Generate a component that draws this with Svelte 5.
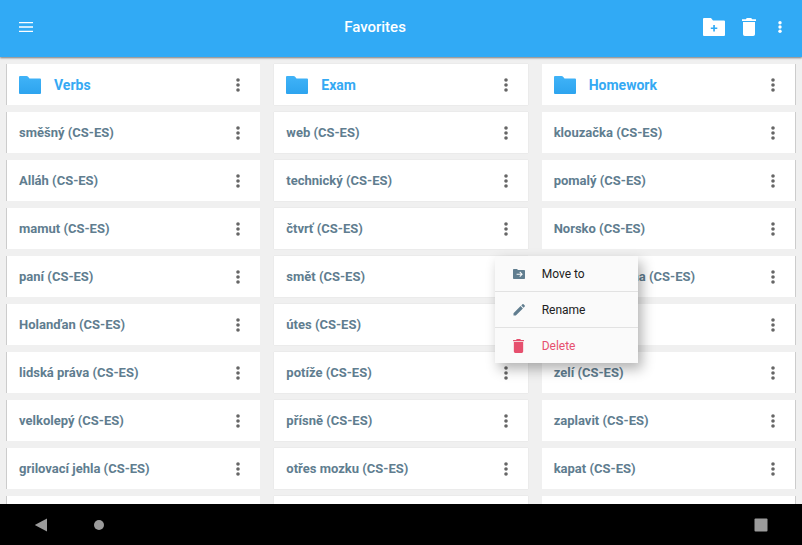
<script>
	const columns = [
		{
			folder: 'Verbs',
			words: ['směšný', 'Alláh', 'mamut', 'paní', 'Holanďan', 'lidská práva', 'velkolepý', 'grilovací jehla']
		},
		{
			folder: 'Exam',
			words: ['web', 'technický', 'čtvrť', 'smět', 'útes', 'potíže', 'přísně', 'otřes mozku']
		},
		{
			folder: 'Homework',
			words: ['klouzačka', 'pomalý', 'Norsko', 'sladká smetana', 'byt', 'zelí', 'zaplavit', 'kapat']
		}
	];

	let openWord = $state('smět');

	function toggleMenu(word) {
		openWord = openWord === word ? '' : word;
	}
</script>

{#snippet dots()}
	<svg class="dots" width="6" height="16" viewBox="0 0 6 16" aria-hidden="true">
		<circle cx="3" cy="3" r="1.8" />
		<circle cx="3" cy="8" r="1.8" />
		<circle cx="3" cy="13" r="1.8" />
	</svg>
{/snippet}

{#snippet trash(width, height)}
	<svg {width} {height} viewBox="0 0 14 18" aria-hidden="true">
		<path d="M0 1.2h3.8L4.8 0h4.4l1 1.2H14V3H0zM1 4h12v12.2a1.8 1.8 0 0 1-1.8 1.8H2.8A1.8 1.8 0 0 1 1 16.2z" />
	</svg>
{/snippet}

<div class="app">
	<header class="toolbar">
		<button class="tool menu-button" aria-label="Open navigation">
			<svg width="14" height="10" viewBox="0 0 14 10" aria-hidden="true">
				<path d="M0 0h14v1.3H0zM0 4.3h14v1.4H0zM0 8.7h14V10H0z" />
			</svg>
		</button>
		<h1 class="title">Favorites</h1>
		<div class="actions">
			<button class="tool" aria-label="New folder">
				<svg width="22" height="18" viewBox="0 0 22 18" aria-hidden="true">
					<path fill-rule="evenodd" d="M0 1a1 1 0 0 1 1-1h7l2 2.6h11a1 1 0 0 1 1 1V17a1 1 0 0 1-1 1H1a1 1 0 0 1-1-1zM10.2 7v2.4H7.8v1.7h2.4v2.4h1.7v-2.4h2.4V9.4h-2.4V7z" />
				</svg>
			</button>
			<button class="tool" aria-label="Delete">{@render trash(14, 18)}</button>
			<button class="tool more" aria-label="More options">
				<svg width="4" height="12" viewBox="0 0 4 12" aria-hidden="true">
					<circle cx="2" cy="1.7" r="1.7" />
					<circle cx="2" cy="6" r="1.7" />
					<circle cx="2" cy="10.3" r="1.7" />
				</svg>
			</button>
		</div>
	</header>

	<main class="columns">
		{#each columns as column}
			<ul class="column">
				<li class="card folder">
					<svg class="folder-icon" width="22" height="18" viewBox="0 0 22 18" aria-hidden="true">
						<defs>
							<linearGradient id="fill-{column.folder}" x1="0" y1="0" x2="0" y2="1">
								<stop offset="0" stop-color="#40b3f8" />
								<stop offset="1" stop-color="#2da4ef" />
							</linearGradient>
						</defs>
						<path fill="url(#fill-{column.folder})" d="M0 1a1 1 0 0 1 1-1h6.5a2 2 0 0 1 1.4.6l1.6 2H21a1 1 0 0 1 1 1V17a1 1 0 0 1-1 1H1a1 1 0 0 1-1-1z" />
					</svg>
					<span class="name">{column.folder}</span>
					<button class="card-more" aria-label="Options for {column.folder}">{@render dots()}</button>
				</li>
				{#each column.words as word}
					<li class="card">
						<span class="name">{word} (CS-ES)</span>
						<button class="card-more" aria-label="Options for {word}" onclick={() => toggleMenu(word)}>
							{@render dots()}
						</button>
						{#if openWord === word}
							<div class="popup" role="menu">
								<button class="popup-item" role="menuitem">
									<span class="popup-icon">
										<svg width="12" height="10" viewBox="0 0 12 10" aria-hidden="true">
											<path fill-rule="evenodd" d="M0 .8A.8.8 0 0 1 .8 0H4l1 .9h6.2a.8.8 0 0 1 .8.8v7.5a.8.8 0 0 1-.8.8H.8a.8.8 0 0 1-.8-.8zM6.4 3.2l1.4 1.5H3.6v1h4.2L6.4 7.2l.7.7 2.7-2.7-2.7-2.7z" />
										</svg>
									</span>
									Move to
								</button>
								<button class="popup-item" role="menuitem">
									<span class="popup-icon">
										<svg width="12" height="12" viewBox="0 0 12 12" aria-hidden="true">
											<path d="M.5 9.2 7.6 2.1l2.3 2.3-7.1 7.1H.5zM8.3 1.4 9.4.3a.9.9 0 0 1 1.2 0l1.1 1.1a.9.9 0 0 1 0 1.2l-1.1 1.1z" />
										</svg>
									</span>
									Rename
								</button>
								<button class="popup-item danger" role="menuitem">
									<span class="popup-icon">{@render trash(11, 14)}</span>
									Delete
								</button>
							</div>
						{/if}
					</li>
				{/each}
				<li class="card"></li>
			</ul>
		{/each}
	</main>

	<nav class="system-bar">
		<button class="system" aria-label="Back">
			<svg width="14" height="14" viewBox="0 0 14 14" aria-hidden="true">
				<path d="M13 .5v13L1.2 7.3a.4.4 0 0 1 0-.6z" />
			</svg>
		</button>
		<button class="system" aria-label="Home">
			<svg width="10" height="10" viewBox="0 0 10 10" aria-hidden="true">
				<circle cx="5" cy="5" r="5" />
			</svg>
		</button>
		<button class="system recent" aria-label="Recent apps">
			<svg width="14" height="14" viewBox="0 0 14 14" aria-hidden="true">
				<rect x=".5" y=".5" width="13" height="13" rx="1" />
			</svg>
		</button>
	</nav>
</div>

<style>
	:global(body) {
		background: #f0f0f0;
	}

	.app {
		display: flex;
		flex-direction: column;
		height: 100vh;
		overflow: hidden;
		font-family: Roboto, "Liberation Sans", sans-serif;
		background: #f0f0f0;
	}

	button {
		display: flex;
		align-items: center;
		justify-content: center;
		padding: 0;
		border: 0;
		background: none;
		font: inherit;
		color: inherit;
		cursor: pointer;
	}
	svg {
		display: block;
		fill: currentColor;
	}

	/* Toolbar */
	.toolbar {
		display: grid;
		grid-template-columns: 1fr auto 1fr;
		align-items: center;
		flex: none;
		height: 57px;
		padding: 0 8px 3px;
		box-sizing: border-box;
		color: #fff;
		background: #31aaf5;
		box-shadow: 0 1px 2px rgba(0, 0, 0, 0.5);
	}
	.title {
		margin: 0;
		padding-right: 52px;
		font-size: 15px;
		font-weight: 500;
		line-height: 20px;
	}
	.tool {
		width: 35px;
		height: 36px;
	}
	.menu-button {
		width: 36px;
	}
	.actions {
		display: flex;
		justify-content: flex-end;
	}
	.more {
		width: 28px;
	}

	/* Word cards */
	.columns {
		display: grid;
		grid-template-columns: repeat(3, 1fr);
		gap: 14px;
		flex: 1;
		min-height: 0;
		padding: 7px 7px 0;
		overflow: hidden;
	}
	.column {
		display: flex;
		flex-direction: column;
		gap: 7px;
		margin: 0;
		padding: 0;
		list-style: none;
	}
	.card {
		position: relative;
		display: flex;
		align-items: center;
		flex: none;
		height: 41px;
		padding-left: 12px;
		box-sizing: border-box;
		color: #607d8f;
		background: #fff;
	}
	.column:first-child .card {
		box-shadow: -1px 0 rgba(0, 0, 0, 0.15);
	}
	.column:nth-child(2) .card {
		box-shadow: 0 0 1px rgba(0, 0, 0, 0.12);
	}
	.column:last-child .card {
		box-shadow: 1px 0 rgba(0, 0, 0, 0.15);
	}
	.name {
		flex: 1;
		font-size: 13px;
		font-weight: 700;
		line-height: 20px;
	}
	.folder {
		gap: 13px;
		color: #35a9f3;
	}
	.folder .name {
		font-size: 14px;
	}
	.card-more {
		width: 44px;
		height: 40px;
		color: #666;
	}

	/* Options menu */
	.popup {
		position: absolute;
		top: 0;
		right: -110px;
		z-index: 2;
		width: 143px;
		background: #fafafa;
		box-shadow: 4px 6px 12px rgba(0, 0, 0, 0.3);
	}
	.popup-item {
		justify-content: flex-start;
		gap: 15px;
		width: 100%;
		height: 35px;
		padding-left: 16px;
		font-size: 12px;
		color: #212121;
	}
	.popup-item + .popup-item {
		height: 36px;
		border-top: 1px solid #e2e2e2;
	}
	.popup-icon {
		display: flex;
		justify-content: center;
		width: 16px;
		color: #607d8f;
	}
	.danger,
	.danger .popup-icon {
		color: #e6506e;
	}

	/* Android navigation bar */
	.system-bar {
		display: flex;
		align-items: center;
		flex: none;
		height: 41px;
		gap: 18px;
		padding: 0 21px;
		color: #9b9b9b;
		background: #000;
	}
	.system {
		width: 40px;
		height: 40px;
	}
	.recent {
		margin-left: auto;
	}
</style>
